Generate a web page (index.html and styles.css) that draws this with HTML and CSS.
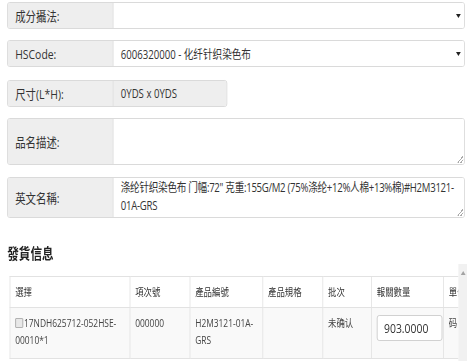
FILE: index.html
```html
<!DOCTYPE html>
<html>
<head>
<meta charset="utf-8">
<link rel="stylesheet" href="styles.css">
</head>
<body>
<div class="page">
  <div class="form">
    <div class="row r-select">
      <div class="label">成分攝法:</div>
      <div class="field select"><span class="val"></span><span class="caret"></span></div>
    </div>
    <div class="row r-select">
      <div class="label">HSCode:</div>
      <div class="field select"><span class="val">6006320000 - 化纤针织染色布</span><span class="caret"></span></div>
    </div>
    <div class="row r-size">
      <div class="label">尺寸(L*H):</div>
      <div class="field readonly"><span class="val">0YDS x 0YDS</span></div>
    </div>
    <div class="row r-desc">
      <div class="label">品名描述:</div>
      <div class="field area"><span class="val"></span><span class="grip"></span></div>
    </div>
    <div class="row r-en">
      <div class="label">英文名稱:</div>
      <div class="field area"><span class="val multi">涤纶针织染色布 门幅:72" 克重:155G/M2 (75%涤纶+12%人棉+13%棉)#H2M3121-<br>01A-GRS</span><span class="grip"></span></div>
    </div>
  </div>
  <h4 class="title">發貨信息</h4>
  <div class="grid-wrap">
    <div class="clip">
      <table class="grid">
        <colgroup>
          <col class="c1"><col class="c2"><col class="c3"><col class="c4"><col class="c5"><col class="c6"><col class="c7">
        </colgroup>
        <thead>
          <tr><th>選擇</th><th>項次號</th><th>產品編號</th><th>產品規格</th><th>批次</th><th>報關數量</th><th>單位</th></tr>
        </thead>
        <tbody>
          <tr>
            <td><span class="check"></span>17NDH625712-052HSE-<br>00010*1</td>
            <td>000000</td>
            <td>H2M3121-01A-<br>GRS</td>
            <td></td>
            <td>未确认</td>
            <td><span class="qty">903.0000</span></td>
            <td>码</td>
          </tr>
        </tbody>
      </table>
    </div>
    <div class="scrollbar"><span class="up"></span></div>
  </div>
</div>
</body>
</html>
```

FILE: styles.css
```css
html, body {
  margin: 0;
  padding: 0;
  overflow: hidden;
}
body {
  width: 467px;
  height: 361px;
  background: #fff;
  color: #333;
  font-family: "Open Sans", "Noto Sans", "Noto Sans CJK SC", sans-serif;
}
.page {
  width: 584px;
  height: 361px;
  box-sizing: border-box;
  padding-top: 2px;
  transform: scaleX(0.8);
  transform-origin: 0 0;
  display: flex;
  flex-direction: column;
}
.form {
  display: flex;
  flex-direction: column;
  gap: 11px;
  padding-left: 9px;
  padding-right: 3px;
}
.row {
  display: flex;
  box-sizing: border-box;
  border: 1px solid #d6d6d6;
  border-radius: 3px;
  overflow: hidden;
  font-size: 13px;
  flex: none;
}
.r-select { height: 27px; }
.r-size { height: 27px; width: 275px; margin-top: 2px; }
.r-desc { height: 47px; }
.r-en { height: 41px; margin-top: 1px; }
.label {
  width: 132px;
  flex: none;
  background: #eee;
  border-right: 1px solid #d6d6d6;
  display: flex;
  align-items: center;
  padding-left: 9px;
  box-sizing: border-box;
}
.field {
  flex: 1;
  position: relative;
  display: flex;
  align-items: center;
  padding: 0 9px;
  background: #fff;
  font-size: 12px;
}
.field.readonly { background: #eee; }
.field.area { align-items: flex-start; }
.val.multi {
  line-height: 18px;
  padding-top: 1px;
  white-space: nowrap;
  font-size: 12px;
  letter-spacing: -0.35px;
}
.caret {
  position: absolute;
  right: 4px;
  top: 11px;
  width: 0;
  height: 0;
  border-left: 3px solid transparent;
  border-right: 3px solid transparent;
  border-top: 4px solid #222;
}
.grip {
  position: absolute;
  right: 1px;
  bottom: 1px;
  width: 7px;
  height: 7px;
  background: linear-gradient(135deg, transparent 45%, #aaa 45%, #aaa 55%, transparent 55%, transparent 72%, #aaa 72%, #aaa 82%, transparent 82%);
}
.title {
  margin: 26px 0 0 9px;
  font-size: 14.5px;
  line-height: 20px;
  font-weight: 700;
  color: #222;
}
.grid-wrap {
  flex: 1;
  display: flex;
  min-height: 0;
}
.clip {
  flex: 1;
  overflow: hidden;
  padding-top: 12px;
  padding-left: 12px;
}
.scrollbar {
  width: 11px;
  flex: none;
  background: #f1f1f1;
  position: relative;
}
.up {
  position: absolute;
  left: 3px;
  top: 7px;
  width: 0;
  height: 0;
  border-left: 3px solid transparent;
  border-right: 3px solid transparent;
  border-bottom: 4px solid #a3a3a3;
}
.grid {
  border-collapse: collapse;
  table-layout: fixed;
  width: 620px;
  font-size: 10.5px;
  color: #444;
}
.c1 { width: 150px; }
.c2 { width: 75px; }
.c3 { width: 91px; }
.c4 { width: 75px; }
.c5 { width: 61px; }
.c6 { width: 90px; }
.c7 { width: 78px; }
.grid th, .grid td {
  border: 1px solid #e2e2e2;
  text-align: left;
  vertical-align: top;
  padding: 7px 6px;
  line-height: 17px;
}
.grid th {
  font-weight: normal;
  height: 15px;
  padding-top: 7px;
  padding-bottom: 6px;
  color: #333;
}
.grid tbody td {
  background: #f9f9f9;
  height: 36px;
}
.check {
  display: inline-block;
  width: 8px;
  height: 8px;
  border: 1px solid #aaa;
  border-radius: 1px;
  background: #e8e8e8;
  vertical-align: -1px;
  margin-right: 1px;
}
.qty {
  display: flex;
  align-items: center;
  width: 82px;
  height: 26px;
  box-sizing: border-box;
  border: 1px solid #ccc;
  border-radius: 3px;
  background: #fff;
  padding-left: 8px;
  font-size: 13px;
  color: #333;
}
```
